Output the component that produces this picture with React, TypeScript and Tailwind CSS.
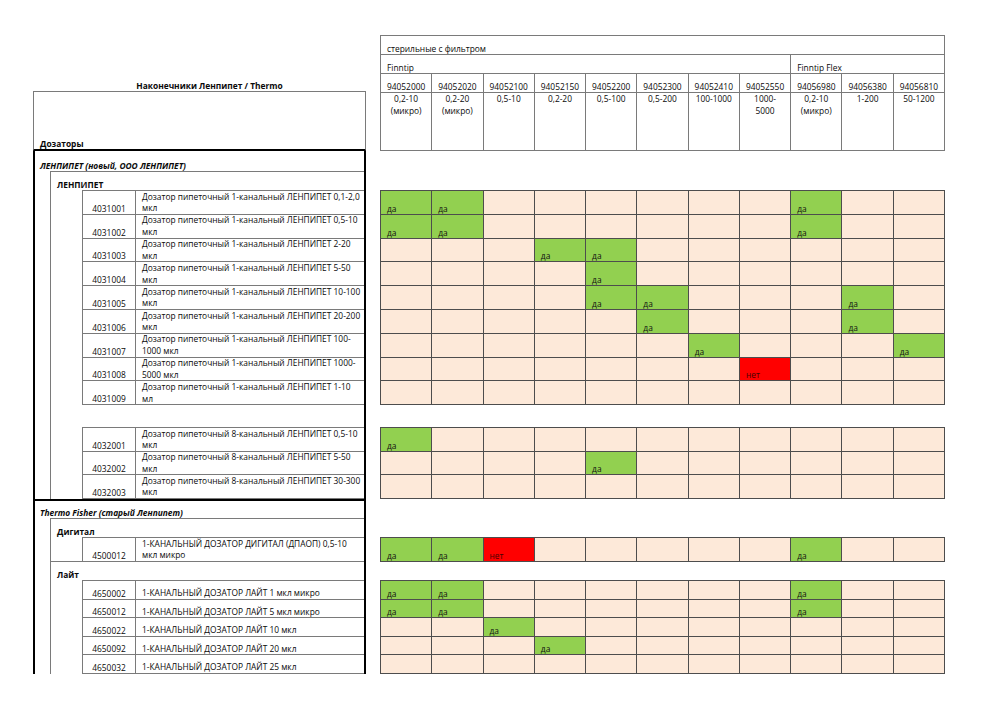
import React from "react";

const LB = "border-[#7a7a7a]";

const one = [
  "yy......y..",
  "yy......y..",
  "...yy......",
  "....y......",
  "....yy...y.",
  ".....y...y.",
  "......y...y",
  ".......n...",
  "...........",
];
const eight = ["y..........", "....y......", "..........."];
const digital = ["yyn.....y.."];
const lite = ["yy......y..", "yy......y..", "..y........", "...y.......", "..........."];

const oneLeft: [string, string[]][] = [
  ["4031001", ["Дозатор пипеточный 1-канальный ЛЕНПИПЕТ 0,1-2,0", "мкл"]],
  ["4031002", ["Дозатор пипеточный 1-канальный ЛЕНПИПЕТ 0,5-10", "мкл"]],
  ["4031003", ["Дозатор пипеточный 1-канальный ЛЕНПИПЕТ 2-20", "мкл"]],
  ["4031004", ["Дозатор пипеточный 1-канальный ЛЕНПИПЕТ 5-50", "мкл"]],
  ["4031005", ["Дозатор пипеточный 1-канальный ЛЕНПИПЕТ 10-100", "мкл"]],
  ["4031006", ["Дозатор пипеточный 1-канальный ЛЕНПИПЕТ 20-200", "мкл"]],
  ["4031007", ["Дозатор пипеточный 1-канальный ЛЕНПИПЕТ 100-", "1000 мкл"]],
  ["4031008", ["Дозатор пипеточный 1-канальный ЛЕНПИПЕТ 1000-", "5000 мкл"]],
  ["4031009", ["Дозатор пипеточный 1-канальный ЛЕНПИПЕТ 1-10", "мл"]],
];
const eightLeft: [string, string[]][] = [
  ["4032001", ["Дозатор пипеточный 8-канальный ЛЕНПИПЕТ 0,5-10", "мкл"]],
  ["4032002", ["Дозатор пипеточный 8-канальный ЛЕНПИПЕТ 5-50", "мкл"]],
  ["4032003", ["Дозатор пипеточный 8-канальный ЛЕНПИПЕТ 30-300", "мкл"]],
];
const liteLeft: [string, string[]][] = [
  ["4650002", ["1-КАНАЛЬНЫЙ ДОЗАТОР ЛАЙТ 1 мкл микро"]],
  ["4650012", ["1-КАНАЛЬНЫЙ ДОЗАТОР ЛАЙТ 5 мкл микро"]],
  ["4650022", ["1-КАНАЛЬНЫЙ ДОЗАТОР ЛАЙТ 10 мкл"]],
  ["4650092", ["1-КАНАЛЬНЫЙ ДОЗАТОР ЛАЙТ 20 мкл"]],
  ["4650032", ["1-КАНАЛЬНЫЙ ДОЗАТОР ЛАЙТ 25 мкл"]],
];

const codes = [
  ["94052000", ["0,2-10", "(микро)"]],
  ["94052020", ["0,2-20", "(микро)"]],
  ["94052100", ["0,5-10"]],
  ["94052150", ["0,2-20"]],
  ["94052200", ["0,5-100"]],
  ["94052300", ["0,5-200"]],
  ["94052410", ["100-1000"]],
  ["94052550", ["1000-", "5000"]],
  ["94056980", ["0,2-10", "(микро)"]],
  ["94056380", ["1-200"]],
  ["94056810", ["50-1200"]],
] as [string, string[]][];

function Grid({ rows, h }: { rows: string[]; h: string }) {
  return (
    <div className="border-t border-l border-[#4d4d4d]">
      {rows.map((r, i) => (
        <div key={i} className="grid grid-cols-11">
          {r.split("").map((c, j) => (
            <div
              key={j}
              className={`${h} border-r border-b border-[#4d4d4d] flex items-end pl-[6px] ${
                c === "y"
                  ? "bg-[#92d050] text-[#111]"
                  : c === "n"
                  ? "bg-[#ff0000] text-[#4a0000]"
                  : "bg-[#fde9d9]"
              }`}
            >
              {c === "y" ? "да" : c === "n" ? "нет" : ""}
            </div>
          ))}
        </div>
      ))}
    </div>
  );
}

function LeftTable({
  rows,
  h,
  last = true,
}: {
  rows: [string, string[]][];
  h: string;
  last?: boolean;
}) {
  return (
    <div className={`ml-[31px] border-t border-l ${LB}`}>
      {rows.map(([code, lines], i) => (
        <div
          key={code}
          className={`${h} flex ${
            last || i < rows.length - 1 ? `border-b ${LB}` : ""
          }`}
        >
          <div className={`w-[53px] shrink-0 border-r ${LB} flex items-end justify-center`}>
            {code}
          </div>
          <div className="flex-1 flex flex-col justify-end pl-[6px] leading-[11.6px]">
            {lines.map((l) => (
              <div key={l} className="whitespace-nowrap">
                {l}
              </div>
            ))}
          </div>
        </div>
      ))}
    </div>
  );
}

export default function App() {
  return (
    <div className="w-[1000px] h-[707px] bg-white text-[#0a0a0a] font-['Open_Sans',sans-serif] text-[8.4px] leading-[11px] overflow-hidden">
      <div className="flex pl-[33px] gap-[14px]">
        {/* LEFT */}
        <div className="w-[333px] shrink-0">
          <div className="h-[91px] flex items-end justify-center pl-[20px] font-bold">
            Наконечники Ленпипет / Thermo
          </div>
          <div className={`h-[60px] border-t border-x ${LB} border-b-2 border-b-black flex items-end pl-[6px] font-bold`}>
            Дозаторы
          </div>
          <div className="border-x-2 border-black">
            <div className="border-b-2 border-black">
              <div className="h-[20px] flex items-end pl-[5px] font-bold italic">
                ЛЕНПИПЕТ (новый, ООО ЛЕНПИПЕТ)
              </div>
              <div className={`ml-[15px] border-l border-t ${LB}`}>
                <div className="h-[18px] flex items-end pl-[6px] font-bold">ЛЕНПИПЕТ</div>
                <LeftTable rows={oneLeft} h="h-[23.8px]" />
                <div className="h-[22px]" />
                <LeftTable rows={eightLeft} h="h-[23.6px]" />
              </div>
            </div>
            <div>
              <div className="h-[17px] flex items-end pl-[5px] font-bold italic">
                Thermo Fisher (старый Ленпипет)
              </div>
              <div className={`ml-[15px] border-l border-t ${LB}`}>
                <div className={`border-b ${LB}`}>
                  <div className="h-[18px] flex items-end pl-[6px] font-bold">Дигитал</div>
                  <LeftTable
                    rows={[["4500012", ["1-КАНАЛЬНЫЙ ДОЗАТОР ДИГИТАЛ (ДПАОП) 0,5-10", "мкл микро"]]]}
                    h="h-[23px]"
                    last={false}
                  />
                </div>
                <div className="h-[18px] flex items-end pl-[6px] font-bold">Лайт</div>
                <LeftTable rows={liteLeft} h="h-[18.6px]" />
              </div>
            </div>
          </div>
        </div>

        {/* RIGHT */}
        <div className="w-[565px] shrink-0">
          <div className="h-[35px]" />
          <div className="border-t border-l border-[#7a7a7a]">
            <div className="h-[19px] border-r border-b border-[#7a7a7a] flex items-end pl-[6px]">
              стерильные с фильтром
            </div>
            <div className="grid grid-cols-11">
              <div className="col-span-8 h-[19px] border-r border-b border-[#7a7a7a] flex items-end pl-[6px]">
                Finntip
              </div>
              <div className="col-span-3 h-[19px] border-r border-b border-[#7a7a7a] flex items-end pl-[6px]">
                Finntip Flex
              </div>
            </div>
            <div className="grid grid-cols-11">
              {codes.map(([c, r]) => (
                <div key={c} className="border-r border-b border-[#7a7a7a]">
                  <div className="h-[19px] border-b border-[#7a7a7a] flex items-end justify-center">
                    {c}
                  </div>
                  <div className="h-[57px] flex flex-col items-center leading-[11.6px]">
                    {r.map((l) => (
                      <div key={l}>{l}</div>
                    ))}
                  </div>
                </div>
              ))}
            </div>
          </div>
          <div className="h-[39px]" />
          <Grid rows={one} h="h-[23.8px]" />
          <div className="h-[22px]" />
          <Grid rows={eight} h="h-[23.6px]" />
          <div className="h-[38px]" />
          <Grid rows={digital} h="h-[24px]" />
          <div className="h-[18px]" />
          <Grid rows={lite} h="h-[18.6px]" />
        </div>
      </div>
    </div>
  );
}
